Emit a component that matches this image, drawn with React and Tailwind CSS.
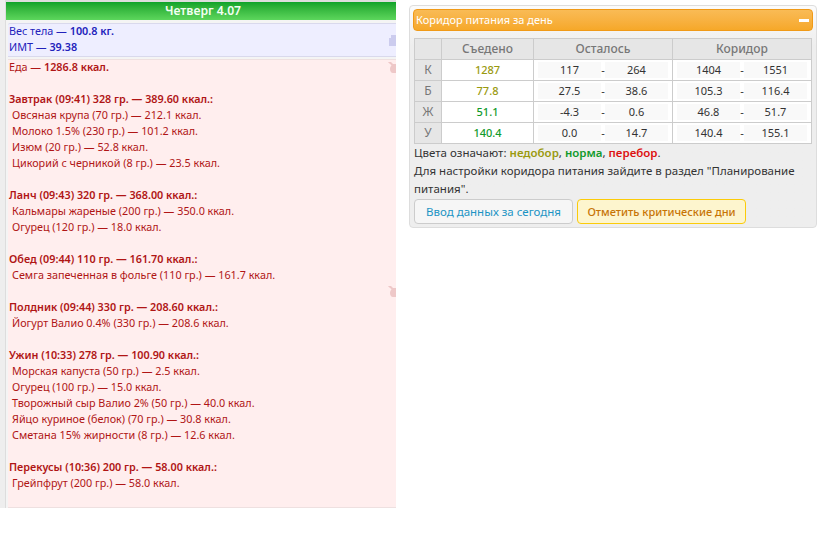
const font = { fontFamily: '"Noto Sans", Verdana, sans-serif' }

const meals = [
  { title: 'Завтрак (09:41) 328 гр. — 389.60 ккал.:', items: ['Овсяная крупа (70 гр.) — 212.1 ккал.', 'Молоко 1.5% (230 гр.) — 101.2 ккал.', 'Изюм (20 гр.) — 52.8 ккал.', 'Цикорий с черникой (8 гр.) — 23.5 ккал.'] },
  { title: 'Ланч (09:43) 320 гр. — 368.00 ккал.:', items: ['Кальмары жареные (200 гр.) — 350.0 ккал.', 'Огурец (120 гр.) — 18.0 ккал.'] },
  { title: 'Обед (09:44) 110 гр. — 161.70 ккал.:', items: ['Семга запеченная в фольге (110 гр.) — 161.7 ккал.'] },
  { title: 'Полдник (09:44) 330 гр. — 208.60 ккал.:', items: ['Йогурт Валио 0.4% (330 гр.) — 208.6 ккал.'] },
  { title: 'Ужин (10:33) 278 гр. — 100.90 ккал.:', items: ['Морская капуста (50 гр.) — 2.5 ккал.', 'Огурец (100 гр.) — 15.0 ккал.', 'Творожный сыр Валио 2% (50 гр.) — 40.0 ккал.', 'Яйцо куриное (белок) (70 гр.) — 30.8 ккал.', 'Сметана 15% жирности (8 гр.) — 12.6 ккал.'] },
  { title: 'Перекусы (10:36) 200 гр. — 58.00 ккал.:', items: ['Грейпфрут (200 гр.) — 58.0 ккал.'] },
]

const rows = [
  { label: 'К', eaten: '1287', color: 'text-[#9a9a10]', left: ['117', '264'], range: ['1404', '1551'] },
  { label: 'Б', eaten: '77.8', color: 'text-[#9a9a10]', left: ['27.5', '38.6'], range: ['105.3', '116.4'] },
  { label: 'Ж', eaten: '51.1', color: 'text-[#119a2b]', left: ['-4.3', '0.6'], range: ['46.8', '51.7'] },
  { label: 'У', eaten: '140.4', color: 'text-[#119a2b]', left: ['0.0', '14.7'], range: ['140.4', '155.1'] },
]

function Pair({ values }) {
  return (
    <div className="flex items-center justify-between px-1">
      <span className="w-[63px] bg-[#f9f9f9] text-center leading-[16px]">{values[0]}</span>
      <span>-</span>
      <span className="w-[63px] bg-[#f9f9f9] text-center leading-[16px]">{values[1]}</span>
    </div>
  )
}

// faded scale icon, cut off by the box edge
function ScaleMark() {
  return (
    <svg className="absolute top-[11px] right-0" width="7" height="11" viewBox="0 0 7 11">
      <path d="M0 3h2V0h5v11H0z" fill="#ccccee" />
    </svg>
  )
}

// faded apple icon, cut off by the box edge
function AppleMark({ className }) {
  return (
    <svg className={className} width="8" height="11" viewBox="0 0 8 11">
      <path d="M0 0h3l2 2h3v9H5C3 11 2 9 2 7 2 5 3 4 3.500 3.500 2.500 2 1 1.500 0 0z" fill="#eec8c8" />
    </svg>
  )
}

export default function App() {
  return (
    <div className="flex h-[545px] w-[835px] items-start bg-white text-[10.8px] font-normal" style={font}>
      <div className="flex h-[508px] w-[396px] bg-[#eeeeee]">
        <div className="w-[5px] shrink-0" />
        <div className="h-full w-[391px] border-l border-[#dddddd] bg-[#f4f4f4]">
          <div className="h-[20px] border-t-2 border-[#dddddd] bg-gradient-to-b from-[#0ca329] to-[#5cd65c] pl-[4px] text-center text-[12.2px] font-semibold leading-[17px] text-[#f2fff2]">
            Четверг 4.07
          </div>
          <div className="relative mt-[3px] ml-[2px] h-[34px] rounded-tl-[2px] border-y border-[#d9d9ec] bg-[#eeeeff] pl-px leading-[16px] text-[#2222bb]">
            <div className="-mt-[1px]">Вес тела — <span className="font-semibold">100.8 кг.</span></div>
            <div>ИМТ — <span className="font-semibold">39.38</span></div>
            <ScaleMark />
          </div>
          <div className="relative mt-[2px] ml-[2px] h-[449px] border-y border-[#eee0e0] bg-[#ffeeee] pl-px leading-[16px] text-[#b01515]">
            <div className="-mt-[1px]">Еда — <span className="font-semibold">1286.8 ккал.</span></div>
            {meals.map((meal) => (
              <div key={meal.title} className="mt-[16px]">
                <div className="font-semibold">{meal.title}</div>
                {meal.items.map((item) => (
                  <div key={item} className="pl-[3px]">{item}</div>
                ))}
              </div>
            ))}
            <AppleMark className="absolute top-[2px] right-0" />
            <AppleMark className="absolute top-[226px] right-0" />
          </div>
        </div>
      </div>

      <div className="mt-[5px] ml-[13px] h-[223px] w-[408px] rounded-[4px] border border-[#dddddd] bg-gradient-to-b from-[#fbfbfb] to-[#eeeeee] to-[40px] p-[3px] text-[11.5px] leading-[18px] text-[#333333]">
        <div className="flex h-[22px] items-center justify-between rounded-[4px] border border-[#f09a18] bg-gradient-to-b from-[#f9bb55] to-[#f6a828] px-[2px] text-[11px] text-white">
          <span>Коридор питания за день</span>
          <span className="mr-[1px] h-[3px] w-[10px] bg-white" />
        </div>
        <table className="mt-[7px] ml-[1px] w-[398px] table-fixed border-collapse border border-[#cccccc] text-[11px] text-[#333333]">
          <thead>
            <tr className="h-[21px] bg-[#e6e6e6] text-[12px] text-[#777777]">
              <th className="w-[27px] border border-[#cccccc] font-normal"></th>
              <th className="w-[92px] border border-[#cccccc] font-medium">Съедено</th>
              <th className="w-[139px] border border-[#cccccc] font-medium">Осталось</th>
              <th className="border border-[#cccccc] font-medium">Коридор</th>
            </tr>
          </thead>
          <tbody>
            {rows.map((row) => (
              <tr key={row.label} className="h-[21px] bg-white">
                <td className="border border-[#cccccc] bg-[#e6e6e6] text-center text-[12px] text-[#777777]">{row.label}</td>
                <td className={`border border-[#cccccc] text-center font-medium ${row.color}`}>{row.eaten}</td>
                <td className="border border-[#cccccc]"><Pair values={row.left} /></td>
                <td className="border border-[#cccccc]"><Pair values={row.range} /></td>
              </tr>
            ))}
          </tbody>
        </table>
        <div className="ml-[1px]">
          <div>Цвета означают: <span className="font-semibold text-[#9a9a10]">недобор</span>, <span className="font-semibold text-[#119a2b]">норма</span>, <span className="font-semibold text-[#dd1111]">перебор</span>.</div>
          <div>Для настройки коридора питания зайдите в раздел "Планирование питания".</div>
        </div>
        <div className="mt-[1px] ml-[1px] flex gap-1">
          <button className="h-[25px] w-[159px] rounded-[4px] border border-[#cccccc] bg-[#f6f6f6] text-[11.5px] text-[#1c94c4]">Ввод данных за сегодня</button>
          <button className="h-[25px] w-[169px] rounded-[4px] border border-[#fbcb09] bg-[#fdf5ce] text-[11px] font-medium text-[#c77405]">Отметить критические дни</button>
        </div>
      </div>
    </div>
  )
}
